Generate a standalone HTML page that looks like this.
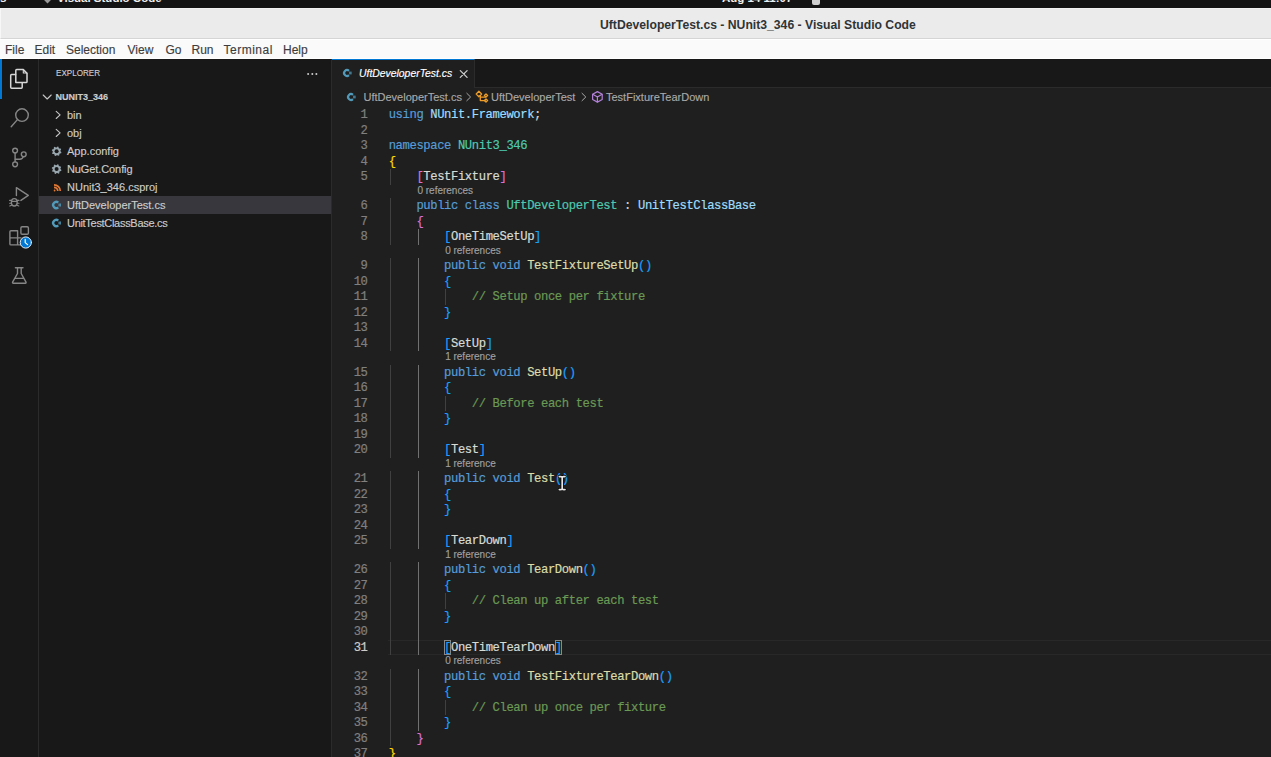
<!DOCTYPE html>
<html><head><meta charset="utf-8">
<style>
*{margin:0;padding:0;box-sizing:border-box}
html,body{width:1271px;height:757px;overflow:hidden;background:#1f1f1f;font-family:"Liberation Sans",sans-serif}
.abs{position:absolute}
#topbar{position:absolute;left:0;top:0;width:1271px;height:8px;background:#141414;overflow:hidden}
#topbar .t{position:absolute;color:#f0f0f0;font-weight:bold;font-size:11.5px;line-height:13px;white-space:nowrap}
#titlebar{position:absolute;left:0;top:8px;width:1271px;height:31px;background:#ebebeb;border-bottom:1px solid #d5d5d5;border-left:1px solid #f7f7f7;border-top:1px solid #f2f2f2}
#title{position:absolute;left:599px;top:8.5px;font-size:12.2px;line-height:14px;font-weight:bold;color:#2f3436;white-space:nowrap}
#menubar{position:absolute;left:0;top:39px;width:1271px;height:20px;background:#fafafa;border-top:1px solid #ffffff;border-bottom:1px solid #ffffff}
#menubar span{position:absolute;top:3px;font-size:12px;line-height:14px;color:#3d3d3d;white-space:nowrap;-webkit-text-stroke:0.15px currentColor}
#activity{position:absolute;left:0;top:59px;width:39px;height:698px;background:#181818;border-right:1px solid #2b2b2b}
#actind{position:absolute;left:0;top:59px;width:2px;height:40px;background:#0078d4}
#sidebar{position:absolute;left:39px;top:59px;width:293px;height:698px;background:#181818;border-right:1px solid #2b2b2b}
.sb{position:absolute;font-size:11px;line-height:14px;color:#cccccc;white-space:nowrap;-webkit-text-stroke:0.15px currentColor}
#selrow{position:absolute;left:39px;top:196px;width:292px;height:18px;background:#37373d}
#tabbar{position:absolute;left:332px;top:59px;width:939px;height:29px;background:#181818;border-bottom:1px solid #2b2b2b}
#tab{position:absolute;left:332px;top:59px;width:143px;height:29px;background:#1f1f1f;border-top:1px solid #0078d4;border-right:1px solid #2b2b2b}
.bc{position:absolute;top:90px;font-size:11px;line-height:14px;color:#a9a9a9;white-space:nowrap;-webkit-text-stroke:0.15px currentColor}
.ln{position:absolute;right:903.50px;width:30px;text-align:right;font-family:"Liberation Mono",monospace;font-size:12.2px;line-height:15.5px;height:15.5px;color:#808080;letter-spacing:-0.390px;margin-top:1px;-webkit-text-stroke:0.2px currentColor}
.ln.act{color:#cccccc}
.cl{position:absolute;left:388.70px;font-family:"Liberation Mono",monospace;font-size:12.2px;line-height:15.5px;height:15.5px;white-space:pre;color:#d4d4d4;letter-spacing:-0.390px;margin-top:1px;-webkit-text-stroke:0.2px currentColor}
.ig{position:absolute;width:1px;height:15.5px;background:#404040}
.ig.ia{background:#707070}
.lens{position:absolute;font-size:10px;line-height:13.5px;color:#a0a0a0;white-space:nowrap;margin-top:-0.9px;-webkit-text-stroke:0.15px currentColor}
#curline{position:absolute;left:388px;width:883px;height:15.5px;border-top:1px solid #282828;border-bottom:1px solid #282828}
.bm{position:absolute;width:7px;height:15.5px;border:1px solid #888888;background:rgba(0,100,0,0.1)}
</style></head><body>
<div id="topbar">
  <div class="t" style="left:0px;top:-8px">s</div>
  <div class="abs" style="left:43.5px;top:-5px;width:7px;height:7px;background:#9a9a9a;transform:rotate(45deg)"></div>
  <div class="t" style="left:57px;top:-8px">Visual Studio Code</div>
  <div class="t" style="left:722px;top:-8px">Aug 14  11:07</div>
  <div class="abs" style="left:812px;top:-3px;width:8px;height:8px;border-radius:2px;background:#d0d0d0"></div>
</div>
<div id="titlebar"><div id="title">UftDeveloperTest.cs - NUnit3_346 - Visual Studio Code</div></div>
<div id="menubar">
  <span style="left:5px">File</span><span style="left:34.5px">Edit</span><span style="left:66px">Selection</span><span style="left:127.5px">View</span><span style="left:165.5px">Go</span><span style="left:191.5px">Run</span><span style="left:223.5px;letter-spacing:0.5px">Terminal</span><span style="left:283px">Help</span>
</div>
<div id="activity"></div>
<div id="actind"></div>
<div id="sidebar"></div>
<div id="selrow"></div>
<div class="sb" style="left:55.5px;top:66px;font-size:9.5px;transform-origin:0 0;transform:scaleX(0.85)">EXPLORER</div>
<div class="sb" style="left:55.5px;top:90px;font-size:9px;font-weight:bold">NUNIT3_346</div>
<div class="sb" style="left:67px;top:108px">bin</div>
<div class="sb" style="left:67px;top:126px">obj</div>
<div class="sb" style="left:67px;top:144px">App.config</div>
<div class="sb" style="left:67px;top:162px;letter-spacing:-0.1px">NuGet.Config</div>
<div class="sb" style="left:67px;top:180px">NUnit3_346.csproj</div>
<div class="sb" style="left:67px;top:198px">UftDeveloperTest.cs</div>
<div class="sb" style="left:67px;top:216px;letter-spacing:-0.3px">UnitTestClassBase.cs</div>
<div id="tabbar"></div>
<div id="tab"></div>
<div class="abs" style="left:359px;top:67px;font-size:10.4px;line-height:14px;font-style:italic;color:#ffffff;white-space:nowrap;-webkit-text-stroke:0.15px currentColor">UftDeveloperTest.cs</div>
<div class="bc" style="left:363.5px">UftDeveloperTest.cs</div>
<div class="bc" style="left:491px">UftDeveloperTest</div>
<div class="bc" style="left:606px">TestFixtureTearDown</div>
<div id="curline" style="top:639.70px"></div><div class="bm" style="left:444.14px;top:639.70px"></div><div class="bm" style="left:555.02px;top:639.70px"></div><div class="ln" style="top:107.20px">1</div>
<div class="cl" style="top:107.20px"><span style="color:#569cd6">using </span><span style="color:#9cdcfe">NUnit.Framework</span><span style="color:#d4d4d4">;</span></div>
<div class="ln" style="top:122.70px">2</div>
<div class="ln" style="top:138.20px">3</div>
<div class="cl" style="top:138.20px"><span style="color:#569cd6">namespace </span><span style="color:#4ec9b0">NUnit3_346</span></div>
<div class="ln" style="top:153.70px">4</div>
<div class="cl" style="top:153.70px"><span style="color:#ffd700">{</span></div>
<div class="ln" style="top:169.20px">5</div>
<div class="ig" style="left:389.90px;top:169.20px"></div>
<div class="cl" style="top:169.20px"><span style="color:#d4d4d4">    </span><span style="color:#da70d6">[</span><span style="color:#d6dbd6">TestFixture</span><span style="color:#da70d6">]</span></div>
<div class="lens" style="top:184.70px;left:417.42px">0 references</div>
<div class="ln" style="top:198.20px">6</div>
<div class="ig" style="left:389.90px;top:198.20px"></div>
<div class="cl" style="top:198.20px"><span style="color:#569cd6">    public class </span><span style="color:#4ec9b0">UftDeveloperTest</span><span style="color:#d4d4d4"> : </span><span style="color:#9cdcfe">UnitTestClassBase</span></div>
<div class="ln" style="top:213.70px">7</div>
<div class="ig" style="left:389.90px;top:213.70px"></div>
<div class="cl" style="top:213.70px"><span style="color:#d4d4d4">    </span><span style="color:#da70d6">{</span></div>
<div class="ln" style="top:229.20px">8</div>
<div class="ig" style="left:389.90px;top:229.20px"></div>
<div class="ig ia" style="left:417.62px;top:229.20px"></div>
<div class="cl" style="top:229.20px"><span style="color:#d4d4d4">        </span><span style="color:#179fff">[</span><span style="color:#d6dbd6">OneTimeSetUp</span><span style="color:#179fff">]</span></div>
<div class="lens" style="top:244.70px;left:445.14px">0 references</div>
<div class="ln" style="top:258.20px">9</div>
<div class="ig" style="left:389.90px;top:258.20px"></div>
<div class="ig ia" style="left:417.62px;top:258.20px"></div>
<div class="cl" style="top:258.20px"><span style="color:#569cd6">        public void </span><span style="color:#dcdcaa">TestFixtureSetUp</span><span style="color:#179fff">()</span></div>
<div class="ln" style="top:273.70px">10</div>
<div class="ig" style="left:389.90px;top:273.70px"></div>
<div class="ig ia" style="left:417.62px;top:273.70px"></div>
<div class="cl" style="top:273.70px"><span style="color:#d4d4d4">        </span><span style="color:#179fff">{</span></div>
<div class="ln" style="top:289.20px">11</div>
<div class="ig" style="left:389.90px;top:289.20px"></div>
<div class="ig ia" style="left:417.62px;top:289.20px"></div>
<div class="ig" style="left:445.34px;top:289.20px"></div>
<div class="cl" style="top:289.20px"><span style="color:#6a9955">            // Setup once per fixture</span></div>
<div class="ln" style="top:304.70px">12</div>
<div class="ig" style="left:389.90px;top:304.70px"></div>
<div class="ig ia" style="left:417.62px;top:304.70px"></div>
<div class="cl" style="top:304.70px"><span style="color:#d4d4d4">        </span><span style="color:#179fff">}</span></div>
<div class="ln" style="top:320.20px">13</div>
<div class="ig" style="left:389.90px;top:320.20px"></div>
<div class="ig ia" style="left:417.62px;top:320.20px"></div>
<div class="ln" style="top:335.70px">14</div>
<div class="ig" style="left:389.90px;top:335.70px"></div>
<div class="ig ia" style="left:417.62px;top:335.70px"></div>
<div class="cl" style="top:335.70px"><span style="color:#d4d4d4">        </span><span style="color:#179fff">[</span><span style="color:#d6dbd6">SetUp</span><span style="color:#179fff">]</span></div>
<div class="lens" style="top:351.20px;left:445.14px">1 reference</div>
<div class="ln" style="top:364.70px">15</div>
<div class="ig" style="left:389.90px;top:364.70px"></div>
<div class="ig ia" style="left:417.62px;top:364.70px"></div>
<div class="cl" style="top:364.70px"><span style="color:#569cd6">        public void </span><span style="color:#dcdcaa">SetUp</span><span style="color:#179fff">()</span></div>
<div class="ln" style="top:380.20px">16</div>
<div class="ig" style="left:389.90px;top:380.20px"></div>
<div class="ig ia" style="left:417.62px;top:380.20px"></div>
<div class="cl" style="top:380.20px"><span style="color:#d4d4d4">        </span><span style="color:#179fff">{</span></div>
<div class="ln" style="top:395.70px">17</div>
<div class="ig" style="left:389.90px;top:395.70px"></div>
<div class="ig ia" style="left:417.62px;top:395.70px"></div>
<div class="ig" style="left:445.34px;top:395.70px"></div>
<div class="cl" style="top:395.70px"><span style="color:#6a9955">            // Before each test</span></div>
<div class="ln" style="top:411.20px">18</div>
<div class="ig" style="left:389.90px;top:411.20px"></div>
<div class="ig ia" style="left:417.62px;top:411.20px"></div>
<div class="cl" style="top:411.20px"><span style="color:#d4d4d4">        </span><span style="color:#179fff">}</span></div>
<div class="ln" style="top:426.70px">19</div>
<div class="ig" style="left:389.90px;top:426.70px"></div>
<div class="ig ia" style="left:417.62px;top:426.70px"></div>
<div class="ln" style="top:442.20px">20</div>
<div class="ig" style="left:389.90px;top:442.20px"></div>
<div class="ig ia" style="left:417.62px;top:442.20px"></div>
<div class="cl" style="top:442.20px"><span style="color:#d4d4d4">        </span><span style="color:#179fff">[</span><span style="color:#d6dbd6">Test</span><span style="color:#179fff">]</span></div>
<div class="lens" style="top:457.70px;left:445.14px">1 reference</div>
<div class="ln" style="top:471.20px">21</div>
<div class="ig" style="left:389.90px;top:471.20px"></div>
<div class="ig ia" style="left:417.62px;top:471.20px"></div>
<div class="cl" style="top:471.20px"><span style="color:#569cd6">        public void </span><span style="color:#dcdcaa">Test</span><span style="color:#179fff">()</span></div>
<div class="ln" style="top:486.70px">22</div>
<div class="ig" style="left:389.90px;top:486.70px"></div>
<div class="ig ia" style="left:417.62px;top:486.70px"></div>
<div class="cl" style="top:486.70px"><span style="color:#d4d4d4">        </span><span style="color:#179fff">{</span></div>
<div class="ln" style="top:502.20px">23</div>
<div class="ig" style="left:389.90px;top:502.20px"></div>
<div class="ig ia" style="left:417.62px;top:502.20px"></div>
<div class="cl" style="top:502.20px"><span style="color:#d4d4d4">        </span><span style="color:#179fff">}</span></div>
<div class="ln" style="top:517.70px">24</div>
<div class="ig" style="left:389.90px;top:517.70px"></div>
<div class="ig ia" style="left:417.62px;top:517.70px"></div>
<div class="ln" style="top:533.20px">25</div>
<div class="ig" style="left:389.90px;top:533.20px"></div>
<div class="ig ia" style="left:417.62px;top:533.20px"></div>
<div class="cl" style="top:533.20px"><span style="color:#d4d4d4">        </span><span style="color:#179fff">[</span><span style="color:#d6dbd6">TearDown</span><span style="color:#179fff">]</span></div>
<div class="lens" style="top:548.70px;left:445.14px">1 reference</div>
<div class="ln" style="top:562.20px">26</div>
<div class="ig" style="left:389.90px;top:562.20px"></div>
<div class="ig ia" style="left:417.62px;top:562.20px"></div>
<div class="cl" style="top:562.20px"><span style="color:#569cd6">        public void </span><span style="color:#dcdcaa">TearDown</span><span style="color:#179fff">()</span></div>
<div class="ln" style="top:577.70px">27</div>
<div class="ig" style="left:389.90px;top:577.70px"></div>
<div class="ig ia" style="left:417.62px;top:577.70px"></div>
<div class="cl" style="top:577.70px"><span style="color:#d4d4d4">        </span><span style="color:#179fff">{</span></div>
<div class="ln" style="top:593.20px">28</div>
<div class="ig" style="left:389.90px;top:593.20px"></div>
<div class="ig ia" style="left:417.62px;top:593.20px"></div>
<div class="ig" style="left:445.34px;top:593.20px"></div>
<div class="cl" style="top:593.20px"><span style="color:#6a9955">            // Clean up after each test</span></div>
<div class="ln" style="top:608.70px">29</div>
<div class="ig" style="left:389.90px;top:608.70px"></div>
<div class="ig ia" style="left:417.62px;top:608.70px"></div>
<div class="cl" style="top:608.70px"><span style="color:#d4d4d4">        </span><span style="color:#179fff">}</span></div>
<div class="ln" style="top:624.20px">30</div>
<div class="ig" style="left:389.90px;top:624.20px"></div>
<div class="ig ia" style="left:417.62px;top:624.20px"></div>
<div class="ln act" style="top:639.70px">31</div>
<div class="ig" style="left:389.90px;top:639.70px"></div>
<div class="ig ia" style="left:417.62px;top:639.70px"></div>
<div class="cl" style="top:639.70px"><span style="color:#d4d4d4">        </span><span style="color:#179fff">[</span><span style="color:#d6dbd6">OneTimeTearDown</span><span style="color:#179fff">]</span></div>
<div class="lens" style="top:655.20px;left:445.14px">0 references</div>
<div class="ln" style="top:668.70px">32</div>
<div class="ig" style="left:389.90px;top:668.70px"></div>
<div class="ig ia" style="left:417.62px;top:668.70px"></div>
<div class="cl" style="top:668.70px"><span style="color:#569cd6">        public void </span><span style="color:#dcdcaa">TestFixtureTearDown</span><span style="color:#179fff">()</span></div>
<div class="ln" style="top:684.20px">33</div>
<div class="ig" style="left:389.90px;top:684.20px"></div>
<div class="ig ia" style="left:417.62px;top:684.20px"></div>
<div class="cl" style="top:684.20px"><span style="color:#d4d4d4">        </span><span style="color:#179fff">{</span></div>
<div class="ln" style="top:699.70px">34</div>
<div class="ig" style="left:389.90px;top:699.70px"></div>
<div class="ig ia" style="left:417.62px;top:699.70px"></div>
<div class="ig" style="left:445.34px;top:699.70px"></div>
<div class="cl" style="top:699.70px"><span style="color:#6a9955">            // Clean up once per fixture</span></div>
<div class="ln" style="top:715.20px">35</div>
<div class="ig" style="left:389.90px;top:715.20px"></div>
<div class="ig ia" style="left:417.62px;top:715.20px"></div>
<div class="cl" style="top:715.20px"><span style="color:#d4d4d4">        </span><span style="color:#179fff">}</span></div>
<div class="ln" style="top:730.70px">36</div>
<div class="ig" style="left:389.90px;top:730.70px"></div>
<div class="cl" style="top:730.70px"><span style="color:#d4d4d4">    </span><span style="color:#da70d6">}</span></div>
<div class="ln" style="top:746.20px">37</div>
<div class="cl" style="top:746.20px"><span style="color:#ffd700">}</span></div>
<svg style="position:absolute;left:0;top:0" width="1271" height="757" viewBox="0 0 1271 757" fill="none" stroke-linecap="round" stroke-linejoin="round">
<g stroke="#d7d7d7" stroke-width="1.5">
<path d="M15.8,82.6 V70.5 Q15.8,69.6 16.7,69.6 H23.3 L27,73.2 V81.7 Q27,82.6 26.1,82.6 Z"/>
<path d="M23.3,69.8 V73 H26.8" stroke-width="1.1"/>
<path d="M15.6,74.6 H11.6 Q10.7,74.6 10.7,75.5 V87.3 Q10.7,88.2 11.6,88.2 H21.3 Q22.2,88.2 22.2,87.3 V82.8"/>
</g>
<g stroke="#868686" stroke-width="1.4">
<circle cx="22" cy="115.1" r="6.3"/>
<path d="M17.4,119.6 L11.2,126.8"/>
<circle cx="15.1" cy="150.6" r="2.4"/>
<circle cx="15.1" cy="164.3" r="2.4"/>
<circle cx="23.75" cy="154.3" r="2.4"/>
<path d="M15.1,153 V161.9"/>
<path d="M23.2,156.6 Q22.6,159.2 19.8,159.3 H15.3"/>
<path d="M16.4,195.6 V187.6 L28.3,195.3 L20.9,200.4"/>
<ellipse cx="14.3" cy="202.3" rx="2.9" ry="3.7"/>
<path d="M9.6,200.4 H11.4 M9.6,203.2 H11.4 M9.8,206 L11.6,205.2 M17.2,200.4 H19 M17.2,203.2 H19 M17,205.2 L18.8,206 M11.6,201.4 H17" stroke-width="1.1"/>
<path d="M17.6,230.8 H10.9 Q9.9,230.8 9.9,231.8 V244 Q9.9,244.9 10.9,244.9 H21 M9.9,237.9 H21 M17.6,230.8 V244.9"/>
<rect x="20.9" y="226.8" width="7.5" height="7.5" rx="1.2"/>
<path d="M15.4,267.7 H23 M17.5,267.7 V273.5 L12.6,282.2 Q12.2,283.2 13.3,283.2 H25.4 Q26.4,283.2 26,282.2 L21.2,273.5 V267.7 M14.9,278.4 H23.8"/>
</g>
<circle cx="25.8" cy="242.5" r="5.6" fill="#0078d4" stroke="#e8f2fb" stroke-width="1"/>
<path d="M25.2,239.4 V242.6 L27.6,244.6" stroke="#ffffff" stroke-width="1.2"/>
<g stroke="#c5c5c5" stroke-width="1.1">
<path d="M43.2,95 L47.2,99 L51.2,95"/>
<path d="M56.2,111.3 L60.1,114.9 L56.2,118.5"/>
<path d="M56.2,129.3 L60.1,132.9 L56.2,136.5"/>
</g>
<path d="M61.41,152.26 L61.13,153.18 L59.84,153.47 L59.36,154.06 L59.32,155.37 L58.48,155.83 L57.36,155.13 L56.60,155.20 L55.64,156.11 L54.72,155.83 L54.43,154.54 L53.84,154.06 L52.53,154.02 L52.07,153.18 L52.77,152.06 L52.70,151.30 L51.79,150.34 L52.07,149.42 L53.36,149.13 L53.84,148.54 L53.88,147.23 L54.72,146.77 L55.84,147.47 L56.60,147.40 L57.56,146.49 L58.48,146.77 L58.77,148.06 L59.36,148.54 L60.67,148.58 L61.13,149.42 L60.43,150.54 L60.50,151.30 Z" fill="#97a5ad"/><circle cx="56.6" cy="151.3" r="2.0" fill="#181818"/><path d="M61.41,170.06 L61.13,170.98 L59.84,171.27 L59.36,171.86 L59.32,173.17 L58.48,173.63 L57.36,172.93 L56.60,173.00 L55.64,173.91 L54.72,173.63 L54.43,172.34 L53.84,171.86 L52.53,171.82 L52.07,170.98 L52.77,169.86 L52.70,169.10 L51.79,168.14 L52.07,167.22 L53.36,166.93 L53.84,166.34 L53.88,165.03 L54.72,164.57 L55.84,165.27 L56.60,165.20 L57.56,164.29 L58.48,164.57 L58.77,165.86 L59.36,166.34 L60.67,166.38 L61.13,167.22 L60.43,168.34 L60.50,169.10 Z" fill="#97a5ad"/><circle cx="56.6" cy="169.1" r="2.0" fill="#181818"/><g fill="none" stroke="#e37933" stroke-width="1.7" stroke-linecap="butt">
<path d="M54,184.8 A6.3,6.3 0 0 1 60.3,191.1"/>
<path d="M54,187.3 A3.8,3.8 0 0 1 57.8,191.1"/>
</g><circle cx="54.6" cy="190.5" r="0.9" fill="#e37933"/>
<g transform="translate(56.2,205.0) scale(1.0)"><path d="M2.05,-2.27 A3.05,3.05 0 1 0 2.05,2.27" stroke="#519aba" stroke-width="2.3" fill="none" stroke-linecap="butt"/>
<path d="M2.9,-1.7 V1.7 M4.2,-1.7 V1.7 M2.3,-0.65 H4.8 M2.3,0.65 H4.8" stroke="#519aba" stroke-width="0.65" fill="none" stroke-linecap="butt"/></g><g transform="translate(56.2,223.0) scale(1.0)"><path d="M2.05,-2.27 A3.05,3.05 0 1 0 2.05,2.27" stroke="#519aba" stroke-width="2.3" fill="none" stroke-linecap="butt"/>
<path d="M2.9,-1.7 V1.7 M4.2,-1.7 V1.7 M2.3,-0.65 H4.8 M2.3,0.65 H4.8" stroke="#519aba" stroke-width="0.65" fill="none" stroke-linecap="butt"/></g><g transform="translate(347.0,73.0) scale(0.95)"><path d="M2.05,-2.27 A3.05,3.05 0 1 0 2.05,2.27" stroke="#519aba" stroke-width="2.3" fill="none" stroke-linecap="butt"/>
<path d="M2.9,-1.7 V1.7 M4.2,-1.7 V1.7 M2.3,-0.65 H4.8 M2.3,0.65 H4.8" stroke="#519aba" stroke-width="0.65" fill="none" stroke-linecap="butt"/></g><g transform="translate(351.0,97.0) scale(0.95)"><path d="M2.05,-2.27 A3.05,3.05 0 1 0 2.05,2.27" stroke="#519aba" stroke-width="2.3" fill="none" stroke-linecap="butt"/>
<path d="M2.9,-1.7 V1.7 M4.2,-1.7 V1.7 M2.3,-0.65 H4.8 M2.3,0.65 H4.8" stroke="#519aba" stroke-width="0.65" fill="none" stroke-linecap="butt"/></g><path d="M460.3,70.6 L467.1,77.4 M467.1,70.6 L460.3,77.4" stroke="#cccccc" stroke-width="1.3"/><g stroke="#a9a9a9" stroke-width="1"><path d="M466.8,93.3 L470.6,97 L466.8,100.7"/><path d="M582,93.3 L585.8,97 L582,100.7"/></g><g stroke="#ee9d28" stroke-width="1.3" fill="none">
<path d="M478.9,91.3 L481.6,94 L478.9,96.7 L476.2,94 Z"/>
<path d="M480.3,95.4 V100.6 H485.2 M480.3,97.1 H485.5"/>
<path d="M486,93.9 L487.6,95.5 L486,97.1 L484.4,95.5 Z"/>
<path d="M486,98.9 L487.6,100.5 L486,102.1 L484.4,100.5 Z"/>
</g><g stroke="#b180d7" stroke-width="1.2" fill="none">
<path d="M597.4,91.6 L602.2,94.2 V99.5 L597.4,102.1 L592.6,99.5 V94.2 Z"/>
<path d="M592.8,94.3 L597.4,96.9 L602,94.3 M597.4,96.9 V102"/>
</g><path d="M559.3,476.6 H561 Q562.2,476.6 562.2,477.8 V488.4 Q562.2,489.6 561,489.6 H559.3 M565,476.6 H563.4 Q562.2,476.6 562.2,477.8 V488.4 Q562.2,489.6 563.4,489.6 H565" stroke="#000" stroke-width="3"/><path d="M559.3,476.6 H561 Q562.2,476.6 562.2,477.8 V488.4 Q562.2,489.6 561,489.6 H559.3 M565,476.6 H563.4 Q562.2,476.6 562.2,477.8 V488.4 Q562.2,489.6 563.4,489.6 H565" stroke="#e8e8e8" stroke-width="1.7"/><g fill="#cccccc"><circle cx="308.1" cy="73.9" r="1"/><circle cx="312.3" cy="73.9" r="1"/><circle cx="316.4" cy="73.9" r="1"/></g></svg>
</body></html>
